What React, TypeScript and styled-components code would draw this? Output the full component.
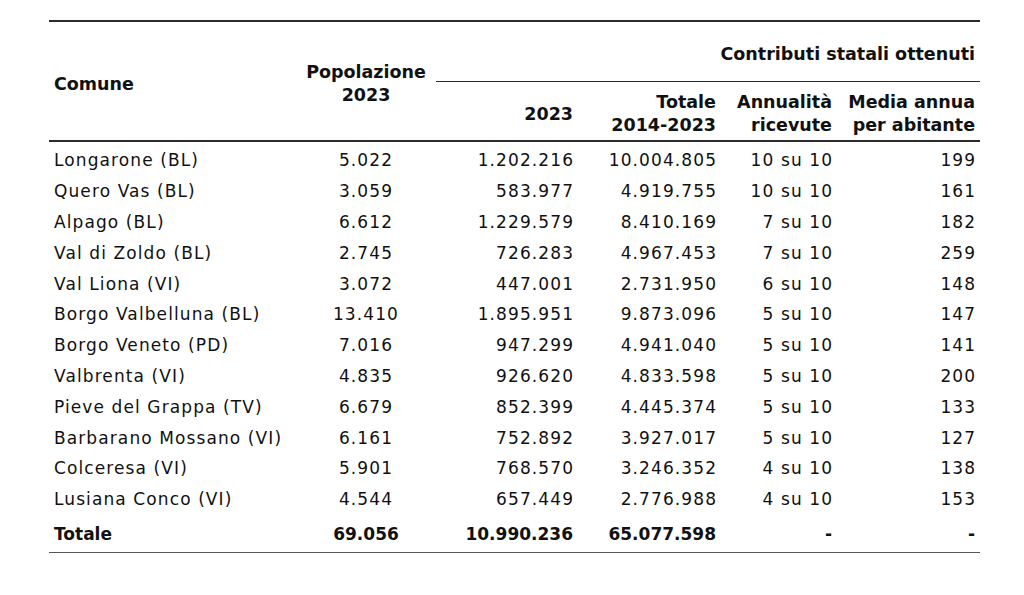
import React from "react";
import styled, { createGlobalStyle } from "styled-components";

const Global = createGlobalStyle`
  html, body { margin: 0; padding: 0; background: #ffffff; }
  body { font-family: "DejaVu Sans", Verdana, sans-serif; color: #111; }
`;

const Page = styled.div`
  padding: 20px 0 0 49px;
`;

const Table = styled.table`
  width: 931px;
  border-collapse: separate;
  border-spacing: 0;
  table-layout: fixed;
  border-top: 2px solid #2b2b2b;
  border-bottom: 1.5px solid #555;
`;

type Align = "left" | "center" | "right";

const Th = styled.th<{ $align: Align; $line?: "thin" | "thick" }>`
  font-weight: bold;
  font-size: 17.5px;
  line-height: 23px;
  text-align: ${(p) => p.$align};
  vertical-align: middle;
  padding: 6px 5px 0 5px;
  height: 60px;
  box-sizing: border-box;
  border-bottom: ${(p) =>
    p.$line === "thin" ? "1.5px solid #2b2b2b" : p.$line === "thick" ? "2px solid #2b2b2b" : "none"};
  white-space: nowrap;
`;

const Td = styled.td<{ $align: Align; $bold?: boolean }>`
  font-size: 17px;
  font-weight: ${(p) => (p.$bold ? "bold" : "normal")};
  letter-spacing: ${(p) => (p.$bold ? "0" : "1.1px")};
  text-align: ${(p) => p.$align};
  padding: ${(p) => (p.$bold ? "4px" : "6px")} ${(p) => (p.$align === "right" && !p.$bold ? "3.9px" : "5px")} 0 5px;
  height: ${(p) => (p.$bold ? "40.4px" : "30.8px")};
  box-sizing: border-box;
  line-height: 20px;
  vertical-align: middle;
  white-space: nowrap;
`;

type Row = [string, string, string, string, string, string];

const rows: Row[] = [
  ["Longarone (BL)", "5.022", "1.202.216", "10.004.805", "10 su 10", "199"],
  ["Quero Vas (BL)", "3.059", "583.977", "4.919.755", "10 su 10", "161"],
  ["Alpago (BL)", "6.612", "1.229.579", "8.410.169", "7 su 10", "182"],
  ["Val di Zoldo (BL)", "2.745", "726.283", "4.967.453", "7 su 10", "259"],
  ["Val Liona (VI)", "3.072", "447.001", "2.731.950", "6 su 10", "148"],
  ["Borgo Valbelluna (BL)", "13.410", "1.895.951", "9.873.096", "5 su 10", "147"],
  ["Borgo Veneto (PD)", "7.016", "947.299", "4.941.040", "5 su 10", "141"],
  ["Valbrenta (VI)", "4.835", "926.620", "4.833.598", "5 su 10", "200"],
  ["Pieve del Grappa (TV)", "6.679", "852.399", "4.445.374", "5 su 10", "133"],
  ["Barbarano Mossano (VI)", "6.161", "752.892", "3.927.017", "5 su 10", "127"],
  ["Colceresa (VI)", "5.901", "768.570", "3.246.352", "4 su 10", "138"],
  ["Lusiana Conco (VI)", "4.544", "657.449", "2.776.988", "4 su 10", "153"],
];

const total: Row = ["Totale", "69.056", "10.990.236", "65.077.598", "-", "-"];

const aligns: Align[] = ["left", "center", "right", "right", "right", "right"];
const widths = [247, 140, 142, 143, 116, 143];

export default function App() {
  return (
    <>
      <Global />
      <Page>
        <Table>
          <colgroup>
            {widths.map((w, i) => (
              <col key={i} style={{ width: w }} />
            ))}
          </colgroup>
          <thead>
            <tr>
              <Th $align="left" rowSpan={2} $line="thick">
                Comune
              </Th>
              <Th $align="center" rowSpan={2} $line="thick">
                Popolazione
                <br />
                2023
              </Th>
              <Th $align="right" colSpan={4} $line="thin">
                Contributi statali ottenuti
              </Th>
            </tr>
            <tr>
              <Th $align="right" $line="thick">
                2023
              </Th>
              <Th $align="right" $line="thick">
                Totale
                <br />
                2014-2023
              </Th>
              <Th $align="right" $line="thick">
                Annualità
                <br />
                ricevute
              </Th>
              <Th $align="right" $line="thick">
                Media annua
                <br />
                per abitante
              </Th>
            </tr>
          </thead>
          <tbody>
            {rows.map((r) => (
              <tr key={r[0]}>
                {r.map((c, i) => (
                  <Td key={i} $align={aligns[i]}>
                    {c}
                  </Td>
                ))}
              </tr>
            ))}
            <tr>
              {total.map((c, i) => (
                <Td key={i} $align={aligns[i]} $bold>
                  {c}
                </Td>
              ))}
            </tr>
          </tbody>
        </Table>
      </Page>
    </>
  );
}
